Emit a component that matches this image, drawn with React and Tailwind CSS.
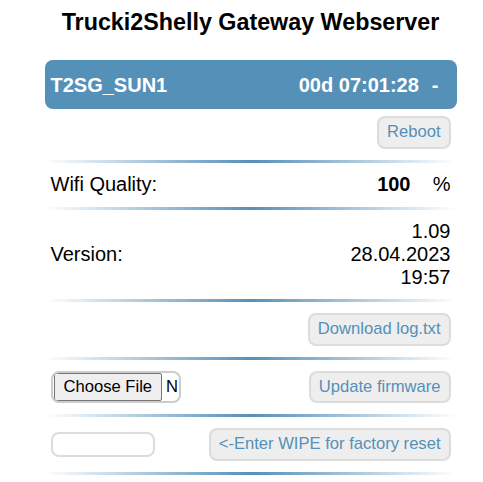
const btn =
  'h-[33px] px-[8px] border-2 border-[#dcdcdc] bg-[#eeeeee] rounded-lg text-[16.6px] leading-none text-[#5590b9] flex items-center'

function Sep() {
  return <div className="h-[3px] bg-linear-to-r from-white via-[#5590b9] to-white" />
}

function BtnRow({ children, className = '' }) {
  return (
    <div className={`flex items-center justify-between px-[6px] pt-[11px] pb-[11px] ${className}`}>
      {children}
    </div>
  )
}

export default function App() {
  return (
    <div className="w-[483px] h-[482px] pl-[18px] bg-white font-['Liberation_Sans',Arial,sans-serif] text-black overflow-hidden">
      <h1 className="pt-[9px] text-center text-[23.3px] leading-[27px] font-bold">
        Trucki2Shelly Gateway Webserver
      </h1>

      <div className="w-[412px] mx-auto mt-[24px]">
        {/* status bar */}
        <div className="h-[49px] rounded-lg bg-[#5590b9] flex items-center justify-between pl-[6px] pr-[18px] text-white text-[20px] font-bold">
          <span>T2SG_SUN1</span>
          <span className="flex">
            <span>00d 07:01:28</span>
            <span className="ml-[13px]">-</span>
          </span>
        </div>

        <div className="flex justify-end px-[6px] pt-[7px] pb-[11px]">
          <button className={btn}>Reboot</button>
        </div>
        <Sep />

        <div className="flex items-center justify-between px-[6px] pt-[10px] pb-[11px] text-[20px] leading-[23px]">
          <span>Wifi Quality:</span>
          <span className="flex">
            <span className="font-bold">100</span>
            <span className="ml-[18px] w-[22px] text-right">%</span>
          </span>
        </div>
        <Sep />

        <div className="flex items-center justify-between px-[6px] py-[10px] text-[20px] leading-[23px]">
          <span>Version:</span>
          <span className="text-right">
            1.09<br />28.04.2023<br />19:57
          </span>
        </div>
        <Sep />

        <BtnRow className="justify-end!">
          <button className={btn}>Download log.txt</button>
        </BtnRow>
        <Sep />

        <BtnRow>
          <div className="w-[130px] h-[32px] border-2 border-[#cccccc] rounded-lg overflow-hidden flex items-center pl-[1px] bg-white">
            <span className="h-full shrink-0 border border-[#767676] bg-[#efefef] rounded-[2px] px-[9px] flex items-center text-[16.6px] leading-none">
              Choose File
            </span>
            <span className="ml-[4px] text-[16.6px] leading-none">N</span>
          </div>
          <button className={`${btn} h-[32px]!`}>Update firmware</button>
        </BtnRow>
        <Sep />

        <BtnRow>
          <input className="w-[104px] h-[25px] border-2 border-[#dcdcdc] rounded-lg bg-white outline-none" />
          <button className={btn}>&lt;-Enter WIPE for factory reset</button>
        </BtnRow>
        <Sep />
      </div>
    </div>
  )
}
